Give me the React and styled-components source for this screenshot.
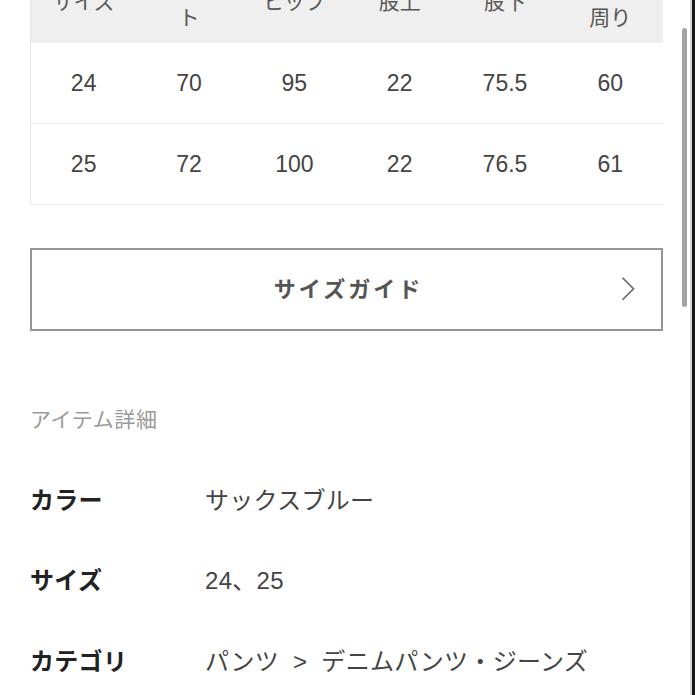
import React from 'react';
import styled, { createGlobalStyle } from 'styled-components';

const GlobalStyle = createGlobalStyle`
    html, body {
        margin: 0;
        padding: 0;
        background: #fff;
        overflow: hidden;
    }
    body {
        font-family: "Liberation Sans", "Noto Sans CJK JP", sans-serif;
        color: #333;
    }
`

const Frame = styled.div`
    position: relative;
    width: 695px;
    height: 695px;
    overflow: hidden;
    box-sizing: border-box;
    border-right: 3px solid #161616;
    box-shadow: inset -2px 0 0 #d8d8d8;
`

const Content = styled.div`
    width: 633px;
    padding-left: 30px;
`

const Table = styled.div`
    margin-top: -40px;
    border-left: 1px solid #e6e6e6;
`

const Row = styled.div`
    display: grid;
    grid-template-columns: repeat(6, 1fr);
    height: ${p => p.$height}px;
    background: ${p => (p.$head ? '#efefef' : '#fff')};
    border-bottom: ${p => (p.$head ? 'none' : '1.5px solid #ebebeb')};
`

const Cell = styled.div`
    display: flex;
    align-items: center;
    justify-content: center;
    text-align: center;
    font-size: ${p => (p.$head ? 21 : 23)}px;
    line-height: ${p => (p.$head ? '32px' : '1')};
    color: ${p => (p.$head ? '#555' : '#444')};
`

const GuideButton = styled.button`
    display: flex;
    align-items: center;
    justify-content: center;
    position: relative;
    width: 633px;
    height: 83px;
    margin-top: 43px;
    padding: 0 0 5px 4px;
    background: #fff;
    border: 2px solid #959595;
    font-family: inherit;
    font-size: 22px;
    font-weight: bold;
    letter-spacing: 3px;
    color: #555;
`

const Chevron = styled.svg`
    position: absolute;
    right: 26px;
    top: 50%;
    transform: translateY(-55%);
`

const SectionTitle = styled.div`
    display: flex;
    align-items: center;
    height: 80px;
    margin-top: 47px;
    font-size: 21px;
    letter-spacing: 0.6px;
    color: #9a9a9a;
`

const DetailRow = styled.div`
    display: grid;
    grid-template-columns: 175px 1fr;
    align-items: center;
    height: 80.5px;
    font-size: 24px;
    letter-spacing: 0.3px;
`

const Label = styled.div`
    font-weight: bold;
    color: #222;
`

const Value = styled.div`
    color: #444;
    word-spacing: 7px;
`

const ScrollThumb = styled.div`
    position: absolute;
    top: 28px;
    left: 682px;
    width: 5px;
    height: 279px;
    border-radius: 3px;
    background: #a4a4a4;
`

const HEAD = [['サイズ'], ['ウエス', 'ト'], ['ヒップ'], ['股上'], ['股下'], ['裾', '周り']]
const ROWS = [
    ['24', '70', '95', '22', '75.5', '60'],
    ['25', '72', '100', '22', '76.5', '61'],
]
const DETAILS = [
    ['カラー', 'サックスブルー'],
    ['サイズ', '24、25'],
    ['カテゴリ', 'パンツ > デニムパンツ・ジーンズ'],
]

export default function App() {
    return (
        <Frame>
            <GlobalStyle />
            <Content>
                <Table>
                    <Row $head $height={83}>
                        {HEAD.map((lines, i) => (
                            <Cell $head key={i}>
                                <span>
                                    {lines.map((l, j) => (
                                        <React.Fragment key={j}>
                                            {j > 0 && <br />}
                                            {l}
                                        </React.Fragment>
                                    ))}
                                </span>
                            </Cell>
                        ))}
                    </Row>
                    {ROWS.map((r, i) => (
                        <Row $height={80} key={i}>
                            {r.map((v, j) => <Cell key={j}>{v}</Cell>)}
                        </Row>
                    ))}
                </Table>

                <GuideButton type="button">
                    サイズガイド
                    <Chevron width="14" height="24" viewBox="0 0 14 24">
                        <polyline points="1.5,1 12.5,12 1.5,23" fill="none" stroke="#666" strokeWidth="1.6" />
                    </Chevron>
                </GuideButton>

                <SectionTitle>アイテム詳細</SectionTitle>
                {DETAILS.map(([k, v]) => (
                    <DetailRow key={k}>
                        <Label>{k}</Label>
                        <Value>{v}</Value>
                    </DetailRow>
                ))}
            </Content>
            <ScrollThumb />
        </Frame>
    );
}
